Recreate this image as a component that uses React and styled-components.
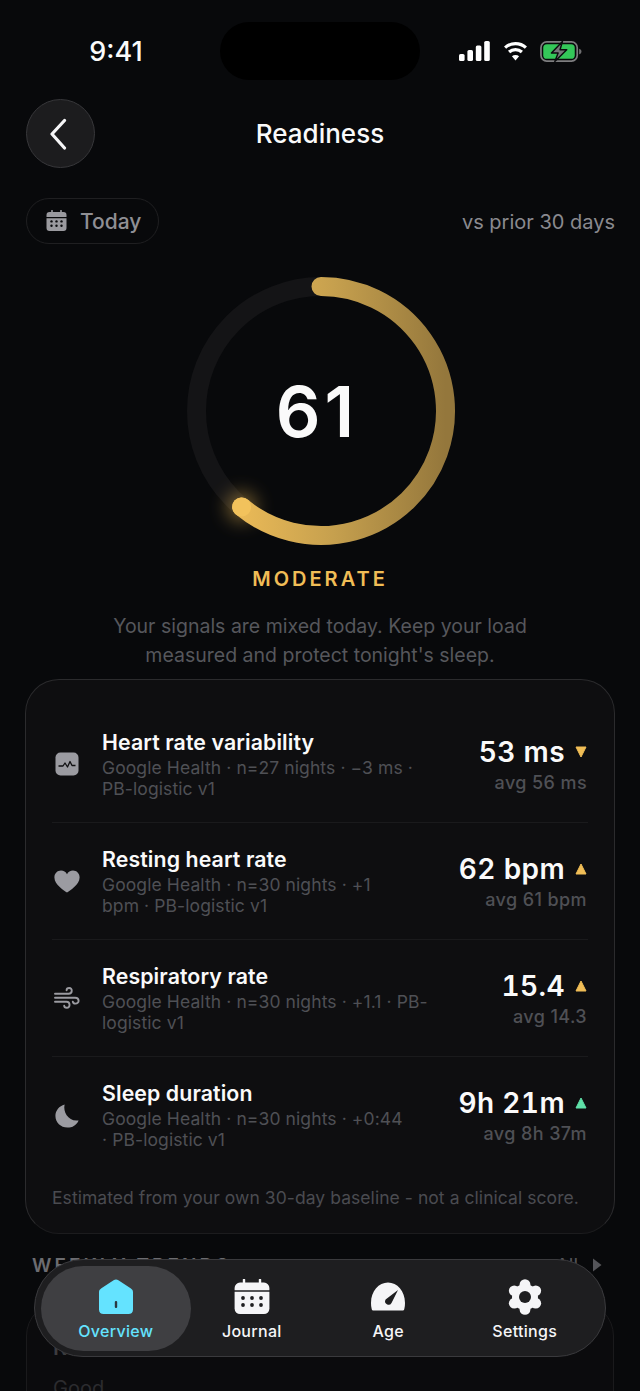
import React from 'react'
import styled, { createGlobalStyle } from 'styled-components'

const GlobalStyle = createGlobalStyle`
  html, body { margin: 0; padding: 0; background: #08090b; }
  * { box-sizing: border-box; }
  body { font-family: Inter, "Noto Sans", "Liberation Sans", sans-serif; }
`

const Page = styled.div`
  position: relative;
  width: 640px;
  height: 1391px;
  overflow: hidden;
  background: #08090b;
  color: #fff;
  padding-top: 22px;
`
const StatusBar = styled.div`
  display: grid;
  grid-template-columns: 220px 200px 220px;
  align-items: center;
  height: 58px;
`
const Time = styled.div`
  font-size: 27px;
  font-weight: 500;
  text-align: center;
  padding-left: 12px;
  color: #fafafa;
`
const Island = styled.div`
  height: 58px;
  border-radius: 29px;
  background: #000;
`
const StatusIcons = styled.div`
  display: flex;
  align-items: center;
  gap: 12px;
  padding-left: 39px;
  svg { display: block; }
`
const Header = styled.header`
  display: grid;
  grid-template-columns: 1fr auto 1fr;
  align-items: center;
  margin-top: 19px;
  padding: 0 26px;
  height: 69px;
`
const BackButton = styled.button`
  width: 69px;
  height: 69px;
  border-radius: 50%;
  border: 1.5px solid #37373a;
  background: #1c1c1e;
  padding: 0 4px 0 0;
  display: flex;
  align-items: center;
  justify-content: center;
`
const Title = styled.h1`
  margin: 0;
  font-size: 26px;
  font-weight: 500;
  color: #fafafa;
`
const FilterRow = styled.div`
  display: flex;
  justify-content: space-between;
  align-items: center;
  margin-top: 30px;
  padding: 0 25px 0 26px;
  height: 46px;
`
const DatePill = styled.div`
  display: flex;
  align-items: center;
  gap: 13px;
  height: 46px;
  width: 133px;
  padding-left: 19px;
  border: 1.5px solid #1f1f21;
  border-radius: 23px;
  font-size: 21px;
  font-weight: 500;
  color: #8f8f94;
`
const Compare = styled.div`
  font-size: 20px;
  padding-top: 2px;
  color: #8a8a8f;
`
const RingWrap = styled.div`
  position: relative;
  width: 268px;
  height: 268px;
  margin: 33px 0 0 186.5px;
  svg { display: block; overflow: visible; }
`
const Score = styled.div`
  position: absolute;
  inset: 0;
  display: flex;
  align-items: center;
  justify-content: center;
  font-size: 70px;
  font-weight: 600;
  letter-spacing: 4px;
  color: #fafafa;
  padding-right: 7px;
`
const Level = styled.div`
  margin-top: 22px;
  text-align: center;
  font-size: 20px;
  line-height: 24px;
  font-weight: 600;
  letter-spacing: 3px;
  color: #f0bd56;
`
const Summary = styled.p`
  margin: 21px 0 0;
  text-align: center;
  font-size: 19.5px;
  line-height: 29px;
  color: #56575c;
`
const Card = styled.section`
  margin: 9px 25px 0;
  height: 555px;
  padding: 26px 26px 0;
  border-radius: 34px;
  border: 1.5px solid #2b2b2d;
  border-bottom-color: #1c1c1e;
  background: #0e0e10;
`
const Row = styled.div`
  display: grid;
  grid-template-columns: 50px 1fr auto;
  align-items: center;
  height: 117px;
  border-bottom: ${p => (p.$last ? 'none' : '1px solid #1a1a1c')};
`
const RowIcon = styled.div`
  display: flex;
  justify-content: center;
  width: 30px;
  svg { display: block; }
`
const RowBody = styled.div`
  padding-right: 52px;
  padding-bottom: 2px;
`
const RowTitle = styled.div`
  font-size: 21.3px;
  line-height: 28px;
  font-weight: 600;
  letter-spacing: 0.1px;
  color: #fafafa;
  margin-bottom: 1px;
`
const RowSub = styled.div`
  font-size: 17.5px;
  line-height: 21px;
  letter-spacing: 0.1px;
  color: #4f5055;
`
const RowValues = styled.div`
  display: flex;
  flex-direction: column;
  align-items: flex-end;
  padding-right: 1px;
  margin-top: 1px;
`
const ValueLine = styled.div`
  display: flex;
  align-items: center;
  gap: 10px;
  font-size: 28px;
  line-height: 36px;
  font-weight: 600;
  letter-spacing: 0.4px;
  font-variant-numeric: tabular-nums;
  color: #fafafa;
`
const Avg = styled.div`
  font-size: 18px;
  line-height: 26px;
  font-weight: 500;
  letter-spacing: 0.4px;
  color: #4f5055;
`
const Note = styled.div`
  margin-top: 12px;
  font-size: 17.5px;
  line-height: 24px;
  letter-spacing: 0.06px;
  color: #4a4b50;
`
const SectionHead = styled.div`
  display: flex;
  justify-content: space-between;
  align-items: center;
  margin-top: 19px;
  padding: 0 38px 0 32px;
  height: 24px;
`
const SectionTitle = styled.div`
  font-size: 19px;
  font-weight: 600;
  letter-spacing: 3px;
  color: #6c6c70;
`
const SectionLink = styled.div`
  display: flex;
  align-items: center;
  gap: 14px;
  font-size: 19px;
  color: #55555a;
`
const TrendCard = styled.section`
  margin: 25px 26px 0;
  height: 200px;
  padding: 30px 26px;
  border-radius: 34px;
  border: 1.5px solid #1a1a1c;
  background: #0b0b0d;
`
const TrendName = styled.div`
  font-size: 21.3px;
  line-height: 28px;
  font-weight: 600;
  color: #3c3c3f;
`
const TrendState = styled.div`
  margin-top: 14px;
  font-size: 20px;
  line-height: 26px;
  color: #2c2c2f;
`
const TabBar = styled.nav`
  position: absolute;
  left: 34px;
  top: 1259px;
  width: 572px;
  height: 98px;
  display: grid;
  grid-template-columns: repeat(4, 136.5px);
  padding: 6px 0 0 12px;
  border-radius: 49px;
  border: 1.5px solid #3a3a3d;
  background: #1e1e20;
`
const Tab = styled.div`
  display: flex;
  flex-direction: column;
  align-items: center;
  height: 85px;
  padding-top: 13px;
  margin: ${p => (p.$active ? '0 -7px 0 -6px' : '0')};
  border-radius: 43px;
  background: ${p => (p.$active ? '#3f3f42' : 'transparent')};
  color: ${p => (p.$active ? '#64e3ff' : '#f5f5f7')};
  svg { display: block; }
`
const TabLabel = styled.div`
  margin-top: 5px;
  font-size: 16px;
  line-height: 22px;
  font-weight: 500;
  letter-spacing: 0.3px;
`

const Signal = () => (
  <svg width="32" height="20" viewBox="0 0 32 20" fill="#fff">
    <rect x="0" y="13" width="5.6" height="7" rx="1.6" />
    <rect x="8.4" y="9" width="5.6" height="11" rx="1.6" />
    <rect x="16.8" y="4.5" width="5.6" height="15.5" rx="1.6" />
    <rect x="25.2" y="0" width="5.6" height="20" rx="1.6" />
  </svg>
)

const Wifi = () => (
  <svg width="25" height="20" viewBox="0 0 24 20" fill="none" stroke="#fff" strokeWidth="3.2">
    <path d="M1.6 6.6 C7.5 1.2 16.5 1.2 22.4 6.6" />
    <path d="M5.6 11 C9.2 7.7 14.8 7.7 18.4 11" />
    <path d="M12 19.4 L8.4 15.3 C10.4 13.6 13.6 13.6 15.6 15.3 Z" fill="#fff" stroke="none" />
  </svg>
)

const Battery = () => (
  <svg width="42" height="21" viewBox="0 0 44 22">
    <rect x="1" y="1" width="38" height="20" rx="6" fill="none" stroke="#7d7d7f" strokeWidth="1.8" />
    <rect x="3.4" y="3.4" width="33" height="15.2" rx="3.8" fill="#34c759" />
    <path d="M41 8 C42.6 8.4 43.4 9.5 43.4 11 C43.4 12.5 42.6 13.6 41 14 Z" fill="#6f6f71" />
    <path d="M23.5 0.5 L12 12.6 H19 L15.5 21.5 L28 9.2 H21 Z" fill="#77777a" stroke="#0a0b0d" strokeWidth="1.5" strokeLinejoin="round" />
  </svg>
)

const Chevron = () => (
  <svg width="24" height="32" viewBox="0 0 24 32" fill="none" stroke="#f5f5f7" strokeWidth="3.2" strokeLinecap="round" strokeLinejoin="round">
    <path d="M17.5 2.5 L5 16 L17.5 30" />
  </svg>
)

const SmallCalendar = () => (
  <svg width="21" height="22" viewBox="0 0 21 22">
    <path d="M6 0.6 V3 M15 0.6 V3" stroke="#9a9a9f" strokeWidth="1.6" strokeLinecap="round" />
    <path d="M3.5 2 H17.5 A3 3 0 0 1 20.5 5 V7 H0.5 V5 A3 3 0 0 1 3.5 2 Z" fill="#9a9a9f" />
    <path d="M0.5 8.2 H20.5 V18 A3 3 0 0 1 17.5 21 H3.5 A3 3 0 0 1 0.5 18 Z" fill="#9a9a9f" />
    {[5.5, 10.5, 15.5].map(x => [11.4, 15.8].map(y => <circle key={x + '-' + y} cx={x} cy={y} r="1.2" fill="#0a0b0d" />))}
  </svg>
)

const Ring = () => {
  const r = 124.5
  const c = 134
  const pct = 0.61
  const a = pct * Math.PI * 2
  const ex = c + r * Math.sin(a)
  const ey = c - r * Math.cos(a)
  return (
    <svg width="268" height="268" viewBox="0 0 268 268">
      <defs>
        <linearGradient id="ringGold" x1="0" y1="0" x2="1" y2="0">
          <stop offset="0" stopColor="#e9b957" />
          <stop offset="0.45" stopColor="#c6a04e" />
          <stop offset="1" stopColor="#94773c" />
        </linearGradient>
        <filter id="ringGlow" x="-100%" y="-100%" width="300%" height="300%">
          <feGaussianBlur stdDeviation="9" />
        </filter>
      </defs>
      <circle cx={c} cy={c} r={r} fill="none" stroke="#141416" strokeWidth="19" />
      <circle cx={ex} cy={ey} r="15" fill="#f0bd56" opacity="0.45" filter="url(#ringGlow)" />
      <path
        d={`M${c} ${c - r} A${r} ${r} 0 1 1 ${ex} ${ey}`}
        fill="none"
        stroke="url(#ringGold)"
        strokeWidth="19"
        strokeLinecap="round"
      />
      <circle cx={ex} cy={ey} r="9.5" fill="#f2c25c" />
    </svg>
  )
}

const HrvIcon = () => (
  <svg width="24" height="24" viewBox="0 0 24 24">
    <rect x="0.5" y="0.5" width="23" height="23" rx="5" fill="#9b9ba1" />
    <path d="M3.5 15.5 H8 L10 12.5 L12.5 16.5 L15 11 L17 15 H20.5" transform="translate(0 -1.5)" fill="none" stroke="#101012" strokeWidth="1.3" strokeLinejoin="round" />
  </svg>
)

const HeartIcon = () => (
  <svg width="26" height="23" viewBox="0 0 26 23">
    <path d="M13 22.5 C10.5 20.6 0.4 14.6 0.4 7.4 C0.4 3.4 3.4 0.6 7 0.6 C9.6 0.6 11.8 1.9 13 4.2 C14.2 1.9 16.4 0.6 19 0.6 C22.6 0.6 25.6 3.4 25.6 7.4 C25.6 14.6 15.5 20.6 13 22.5 Z" fill="#9b9ba1" />
  </svg>
)

const WindIcon = () => (
  <svg width="26" height="22" viewBox="0 0 26 22" fill="none" stroke="#9b9ba1" strokeWidth="1.9" strokeLinecap="round">
    <path d="M1 6.8 H14.6 C18.6 6.8 18.8 1 15.2 1 C13.4 1 12.6 2.2 12.6 3.2" />
    <path d="M1 10.8 H21.2 C25.6 10.8 25.8 16.6 21.4 16.6 C20 16.6 19 15.8 18.8 14.8" />
    <path d="M1 14.8 H12.6 C16.4 14.8 16.6 20.8 12.8 20.8 C11.2 20.8 10.2 19.8 10.2 18.8" />
  </svg>
)

const MoonIcon = () => (
  <svg width="24" height="24" viewBox="0 0 24 24">
    <path d="M9.6 0.4 C7.8 7.8 13.6 18 23.6 16.4 C21.6 21 17.4 23.6 12.4 23.6 C5.8 23.6 0.4 18.4 0.4 11.8 C0.4 6.6 4.2 1.8 9.6 0.4 Z" fill="#9b9ba1" />
  </svg>
)

const TrendArrow = styled.svg`
  display: block;
  flex: none;
`

const Arrow = ({ $dir, color }) => (
  <TrendArrow width="12" height="12" viewBox="0 0 12 12">
    <path
      d={$dir === 'down' ? 'M1 1 H11 L6 11 Z' : 'M6 1 L11 11 H1 Z'}
      fill={color}
      stroke={color}
      strokeWidth="1"
      strokeLinejoin="round"
    />
  </TrendArrow>
)

const HomeIcon = () => (
  <svg width="36" height="36" viewBox="0 0 36 36">
    <path d="M15.6 1.2 C17 0.2 19 0.2 20.4 1.2 L32.6 9.2 C34.4 10.4 35 11.4 35 13.4 V30.4 C35 33.4 33.2 35 30.4 35 H5.6 C2.8 35 1 33.4 1 30.4 V13.4 C1 11.4 1.6 10.4 3.4 9.2 Z" fill="#64e3ff" />
    <rect x="16.8" y="22" width="2.4" height="7" rx="1" fill="#2a3a42" />
  </svg>
)

const CalendarIcon = () => (
  <svg width="36" height="36" viewBox="0 0 36 36">
    <path d="M10 0.8 V5 M26 0.8 V5" stroke="#f5f5f7" strokeWidth="2.4" strokeLinecap="round" />
    <path d="M6 3.6 H30 A5.4 5.4 0 0 1 35.4 9 V11.2 H0.6 V9 A5.4 5.4 0 0 1 6 3.6 Z" fill="#f5f5f7" />
    <path d="M0.6 12.8 H35.4 V29.6 A5.4 5.4 0 0 1 30 35 H6 A5.4 5.4 0 0 1 0.6 29.6 Z" fill="#f5f5f7" />
    {[9, 18, 27].map(x => [19, 26].map(y => <circle key={x + '-' + y} cx={x} cy={y} r="1.9" fill="#1e1e20" />))}
  </svg>
)

const GaugeIcon = () => (
  <svg width="36" height="36" viewBox="0 0 36 36">
    <path d="M1.6 29.6 C1.2 28 1 26 1 24 C1 12 8.8 3.6 18 3.6 C27.2 3.6 35 12 35 24 C35 26 34.8 28 34.4 29.6 C34.2 31 33.6 31.6 32.6 31.6 H3.4 C2.4 31.6 1.8 31 1.6 29.6 Z" fill="#f5f5f7" />
    <path d="M28 11 L21.5 24 A3.4 3.4 0 0 1 15.6 20.6 Z" fill="#1e1e20" />
  </svg>
)

const GearIcon = () => (
  <svg width="36" height="36" viewBox="0 0 36 36">
    <g fill="#f5f5f7">
      <circle cx="18" cy="18" r="13" />
      {[0, 60, 120, 180, 240, 300].map(d => (
        <circle
          key={d}
          cx={18 + 12.4 * Math.sin((d * Math.PI) / 180)}
          cy={18 - 12.4 * Math.cos((d * Math.PI) / 180)}
          r="5.4"
        />
      ))}
    </g>
    <circle cx="18" cy="18" r="6" fill="#1e1e20" />
  </svg>
)

const metrics = [
  {
    icon: <HrvIcon />,
    title: 'Heart rate variability',
    sub: 'Google Health · n=27 nights · −3 ms · PB-logistic v1',
    value: '53 ms',
    avg: 'avg 56 ms',
    dir: 'down',
    color: '#f0bd56',
  },
  {
    icon: <HeartIcon />,
    title: 'Resting heart rate',
    sub: 'Google Health · n=30 nights · +1 bpm · PB-logistic v1',
    value: '62 bpm',
    avg: 'avg 61 bpm',
    dir: 'up',
    color: '#f0bd56',
  },
  {
    icon: <WindIcon />,
    title: 'Respiratory rate',
    sub: 'Google Health · n=30 nights · +1.1 · PB-logistic v1',
    value: '15.4',
    avg: 'avg 14.3',
    dir: 'up',
    color: '#f0bd56',
  },
  {
    icon: <MoonIcon />,
    title: 'Sleep duration',
    sub: 'Google Health · n=30 nights · +0:44 · PB-logistic v1',
    value: '9h 21m',
    avg: 'avg 8h 37m',
    dir: 'up',
    color: '#5fe0a8',
  },
]

const tabs = [
  { label: 'Overview', icon: <HomeIcon />, active: true },
  { label: 'Journal', icon: <CalendarIcon /> },
  { label: 'Age', icon: <GaugeIcon /> },
  { label: 'Settings', icon: <GearIcon /> },
]

export default function App() {
  return (
    <Page>
      <GlobalStyle />
      <StatusBar>
        <Time>9:41</Time>
        <Island />
        <StatusIcons>
          <Signal />
          <Wifi />
          <Battery />
        </StatusIcons>
      </StatusBar>
      <Header>
        <BackButton aria-label="Back">
          <Chevron />
        </BackButton>
        <Title>Readiness</Title>
        <div />
      </Header>
      <FilterRow>
        <DatePill>
          <SmallCalendar />
          Today
        </DatePill>
        <Compare>vs prior 30 days</Compare>
      </FilterRow>
      <RingWrap>
        <Ring />
        <Score>61</Score>
      </RingWrap>
      <Level>MODERATE</Level>
      <Summary>
        Your signals are mixed today. Keep your load
        <br />
        measured and protect tonight's sleep.
      </Summary>
      <Card>
        {metrics.map((m, i) => (
          <Row key={m.title} $last={i === metrics.length - 1}>
            <RowIcon>{m.icon}</RowIcon>
            <RowBody>
              <RowTitle>{m.title}</RowTitle>
              <RowSub>{m.sub}</RowSub>
            </RowBody>
            <RowValues>
              <ValueLine>
                {m.value}
                <Arrow $dir={m.dir} color={m.color} />
              </ValueLine>
              <Avg>{m.avg}</Avg>
            </RowValues>
          </Row>
        ))}
        <Note>Estimated from your own 30-day baseline - not a clinical score.</Note>
      </Card>
      <SectionHead>
        <SectionTitle>WEEKLY TRENDS</SectionTitle>
        <SectionLink>
          All
          <svg width="10" height="14" viewBox="0 0 10 14">
            <path d="M1 0.5 L9.5 7 L1 13.5 Z" fill="#55555a" />
          </svg>
        </SectionLink>
      </SectionHead>
      <TrendCard>
        <TrendName>Readiness</TrendName>
        <TrendState>Good</TrendState>
      </TrendCard>
      <TabBar>
        {tabs.map(t => (
          <Tab key={t.label} $active={t.active}>
            {t.icon}
            <TabLabel>{t.label}</TabLabel>
          </Tab>
        ))}
      </TabBar>
    </Page>
  )
}
